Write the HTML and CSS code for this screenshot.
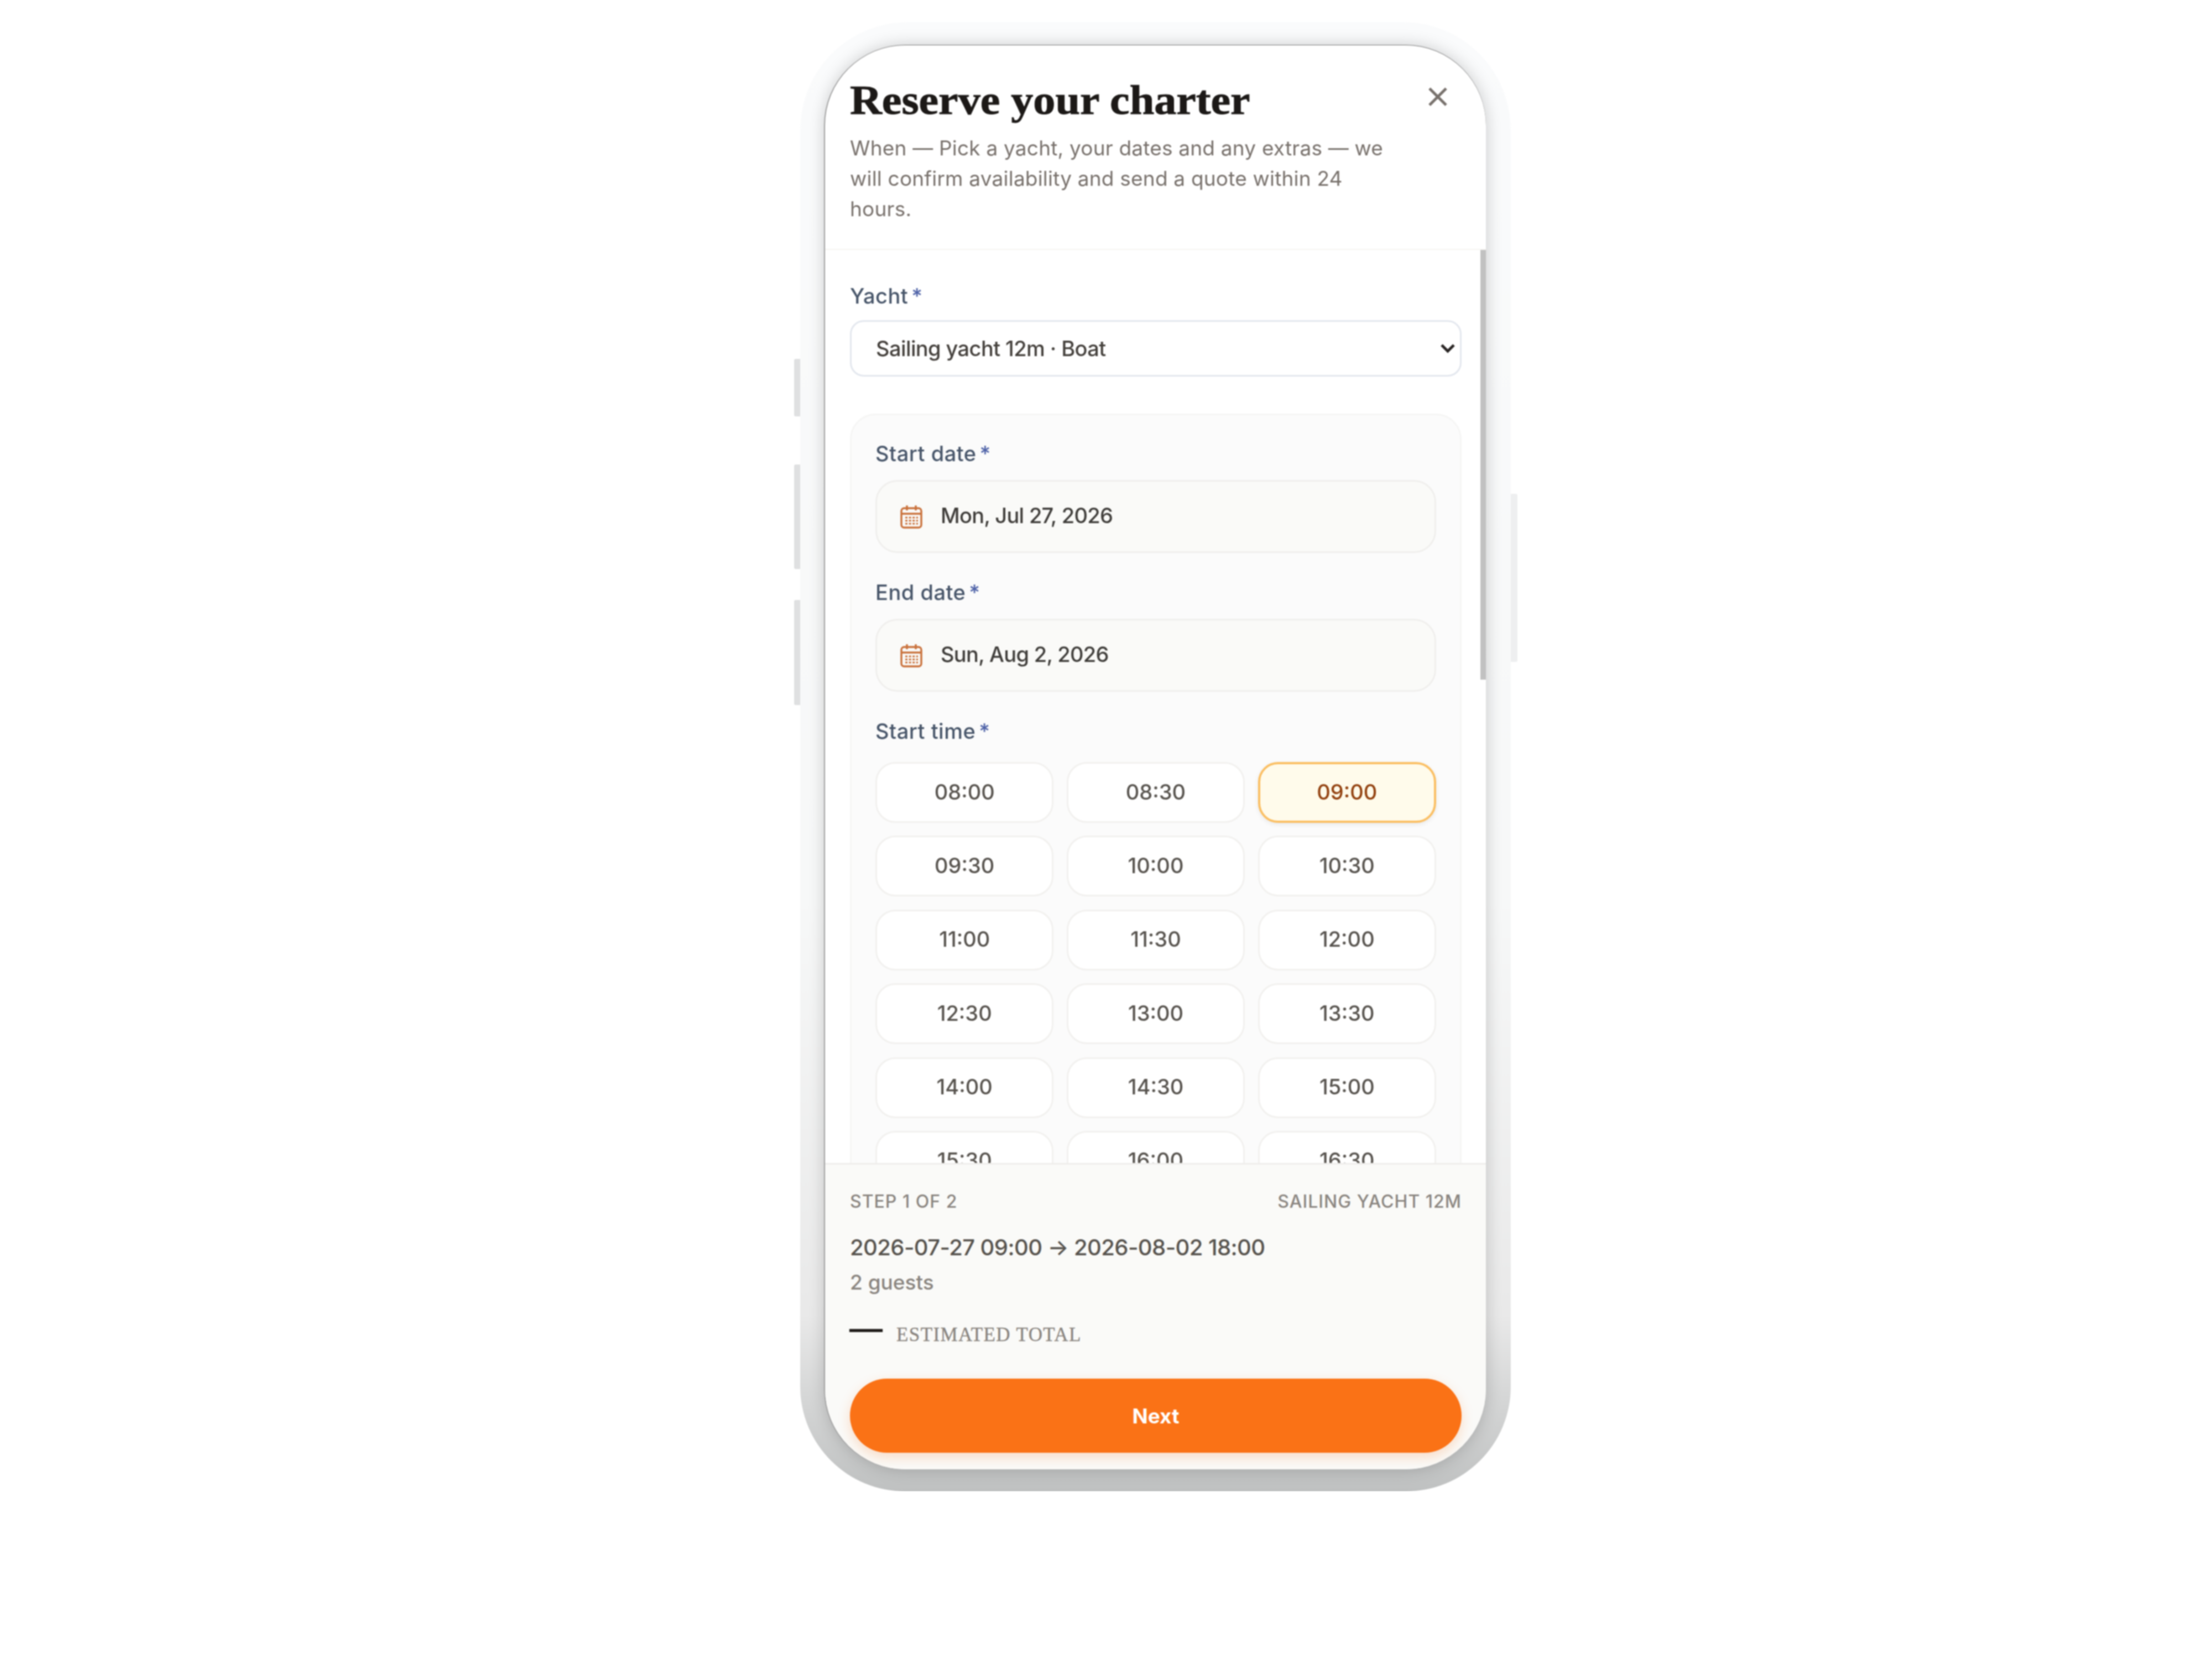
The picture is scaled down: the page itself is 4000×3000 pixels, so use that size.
FILE: index.html
```html
<!DOCTYPE html>
<html lang="en">
<head>
<meta charset="utf-8">
<title>Reserve your charter</title>
<link rel="stylesheet" href="styles.css">
</head>
<body>
<div class="stage">
  <div class="phone">
    <i class="key key-a"></i><i class="key key-b"></i><i class="key key-c"></i><i class="key key-d"></i>
    <div class="screen">
      <header class="head">
        <div class="head-text">
          <h1 class="title">Reserve your charter</h1>
          <p class="desc">When — Pick a yacht, your dates and any extras — we will confirm availability and send a quote within 24 hours.</p>
        </div>
        <svg class="close" viewBox="0 0 34 34"><path d="M2 2 32 32M32 2 2 32"/></svg>
      </header>
      <main class="body">
        <div class="scrollbar"></div>
        <label class="label">Yacht<span class="req">*</span></label>
        <div class="select">
          <span>Sailing yacht 12m · Boat</span>
          <svg class="chev" viewBox="0 0 28 18"><path d="M3 3 14 14 25 3"/></svg>
        </div>
        <section class="panel">
          <label class="label">Start date<span class="req">*</span></label>
          <div class="date">
            <svg class="cal" viewBox="0 0 40 44"><use href="#cal"/></svg>
            <span>Mon, Jul 27, 2026</span>
          </div>
          <label class="label label-next">End date<span class="req">*</span></label>
          <div class="date">
            <svg class="cal" viewBox="0 0 40 44"><use href="#cal"/></svg>
            <span>Sun, Aug 2, 2026</span>
          </div>
          <label class="label label-next label-time">Start time<span class="req">*</span></label>
          <div class="times">
            <button class="time">08:00</button>
            <button class="time">08:30</button>
            <button class="time is-on">09:00</button>
            <button class="time">09:30</button>
            <button class="time">10:00</button>
            <button class="time">10:30</button>
            <button class="time">11:00</button>
            <button class="time">11:30</button>
            <button class="time">12:00</button>
            <button class="time">12:30</button>
            <button class="time">13:00</button>
            <button class="time">13:30</button>
            <button class="time">14:00</button>
            <button class="time">14:30</button>
            <button class="time">15:00</button>
            <button class="time">15:30</button>
            <button class="time">16:00</button>
            <button class="time">16:30</button>
          </div>
        </section>
      </main>
      <footer class="foot">
        <div class="meta"><span>Step 1 of 2</span><span class="meta-r">Sailing yacht 12m</span></div>
        <div class="range">2026-07-27 09:00 → 2026-08-02 18:00</div>
        <div class="guests">2 guests</div>
        <div class="total"><span class="dash">—</span><span class="total-l">Estimated total</span></div>
        <button class="next">Next</button>
      </footer>
    </div>
  </div>
</div>
<svg class="defs" width="0" height="0">
  <symbol id="cal" viewBox="0 0 40 44">
    <g fill="none" stroke="#c9703a" stroke-width="3.4">
      <rect x="2" y="7" width="36" height="35" rx="5"/>
      <path d="M2 17H38M12 2V11M28 2V11"/>
      <path stroke-width="3" stroke-dasharray="4 2.6" d="M9 24H32M9 29.5H32M9 35H32"/>
    </g>
  </symbol>
</svg>
</body>
</html>
```
FILE: styles.css
```css
* { box-sizing: border-box; }
html, body { margin: 0; background: #fff; }
body { font-family: Inter, "Noto Sans", sans-serif; }
.stage { padding: 40px 0 0 1447px; }
.defs { position: absolute; }

.phone {
  position: relative;
  width: 1285px;
  height: 2657px;
  padding: 42px 45px 40px;
  border-radius: 195px 195px 190px 190px;
  background: linear-gradient(180deg, #fafbfc 0%, #f7f8f8 60%, #e9e9e9 88%, #bfc1c1 100%);
  filter: blur(.8px);
}
.key { position: absolute; display: block; background: #dfe0e1; }
.key-a { left: -11px; top: 609px; width: 11px; height: 104px; border-radius: 3px 0 0 3px; }
.key-b { left: -11px; top: 800px; width: 11px; height: 189px; border-radius: 3px 0 0 3px; }
.key-c { left: -11px; top: 1045px; width: 11px; height: 190px; border-radius: 3px 0 0 3px; }
.key-d { right: -12px; top: 853px; width: 12px; height: 304px; border-radius: 0 3px 3px 0; background: #eeeff0; }

.screen {
  height: 100%;
  display: flex;
  flex-direction: column;
  background: #fff;
  border-radius: 145px;
  overflow: hidden;
  box-shadow: -2px 0 0 #a0a0a0, 0 -1px 0 #777, 0 0 30px rgba(0, 0, 0, .2);
}

.head {
  flex: none;
  height: 370px;
  display: flex;
  justify-content: space-between;
  padding: 51px 70px 0 45px;
  border-bottom: 2px solid #f6f5f2;
}
.head-text { width: 1000px; }
.title {
  margin: 0;
  font: 700 75px/96px "Liberation Serif", serif;
  transform: scaleX(1.068);
  transform-origin: left center;
  -webkit-text-stroke: 1px #1c1917;
  color: #1c1917;
}
.desc {
  margin: 11px 0 0;
  font-size: 37px;
  letter-spacing: .2px;
  line-height: 55px;
  color: #78716c;
}
.close {
  width: 34px;
  height: 34px;
  margin-top: 25px;
  fill: none;
  stroke: #78716c;
  stroke-width: 5;
}

.body {
  flex: 1;
  min-height: 0;
  position: relative;
  overflow: hidden;
  padding: 58px 44px 0 45px;
}
.scrollbar {
  position: absolute;
  top: 0;
  right: 0;
  width: 10px;
  height: 777px;
  background: #c1c1c1;
}
.label {
  display: block;
  font-size: 38px;
  font-weight: 500;
  letter-spacing: .5px;
  line-height: 50px;
  color: #475569;
}
.req { margin-left: 6px; color: #4f63a8; }

.select {
  display: flex;
  align-items: center;
  justify-content: space-between;
  height: 102px;
  margin-top: 19px;
  padding: 0 8px 0 44px;
  border: 3px solid #e3e7ee;
  border-radius: 25px;
  font-size: 38px;
  font-weight: 500;
  letter-spacing: -.6px;
  color: #44403c;
}
.chev { width: 28px; height: 18px; fill: none; stroke: #292524; stroke-width: 5; }

.panel {
  margin-top: 67px;
  padding: 44px 43px 300px;
  border: 3px solid #f6f6f5;
  border-radius: 46px;
  background: #fbfbfb;
}
.date {
  display: flex;
  align-items: center;
  gap: 33px;
  height: 132px;
  margin-top: 23px;
  padding: 0 0 5px 42px;
  border: 3px solid #f0efed;
  border-radius: 40px;
  background: #fafaf8;
  font-size: 38px;
  font-weight: 500;
  letter-spacing: -.7px;
  color: #3f3d3a;
}
.cal { width: 40px; height: 44px; margin-top: 4px; }
.label-next { margin-top: 46px; }

.times {
  display: grid;
  grid-template-columns: repeat(3, 1fr);
  grid-auto-rows: 110px;
  gap: 23.4px;
  margin-top: 31px;
}
.time {
  padding: 0 0 3px;
  border: 3px solid #f2f1ef;
  border-radius: 36px;
  background: #fff;
  font: 500 38px Inter, "Noto Sans", sans-serif;
  color: #57534e;
}
.is-on {
  border: 4px solid #fbbf63;
  background: #fffbeb;
  color: #92400e;
  box-shadow: 0 3px 8px rgba(0, 0, 0, .08);
}

.foot {
  flex: none;
  height: 554px;
  padding: 45px 44px 0 45px;
  border-top: 3px solid #efeeec;
  background: #fafaf8;
}
.meta {
  display: flex;
  justify-content: space-between;
  font-size: 32px;
  font-weight: 500;
  line-height: 44px;
  text-transform: uppercase;
  letter-spacing: 1px;
  color: #8a8580;
}
.range {
  margin-top: 33px;
  font-size: 40px;
  font-weight: 500;
  letter-spacing: -.6px;
  line-height: 56px;
  color: #57534e;
}
.guests {
  margin-top: 10px;
  font-size: 37px;
  font-weight: 500;
  line-height: 50px;
  color: #8a8580;
}
.total {
  display: flex;
  align-items: center;
  gap: 26px;
  margin-top: 45px;
  height: 50px;
}
.dash {
  margin-top: -28px;
  font: 700 58px/50px "Liberation Serif", serif;
  -webkit-text-stroke: 1.5px #1c1917;
  color: #1c1917;
}
.total-l {
  font: 400 35px/50px "Liberation Serif", serif;
  text-transform: uppercase;
  letter-spacing: 1.4px;
  -webkit-text-stroke: .4px #8a8580;
  color: #8a8580;
}
.next {
  display: block;
  width: 100%;
  height: 134px;
  margin-top: 54px;
  padding: 0;
  border: 0;
  border-radius: 67px;
  background: #fa7216;
  box-shadow: 0 8px 22px rgba(249, 115, 22, .22);
  font: 700 37px Inter, "Noto Sans", sans-serif;
  color: #fff;
}
```
